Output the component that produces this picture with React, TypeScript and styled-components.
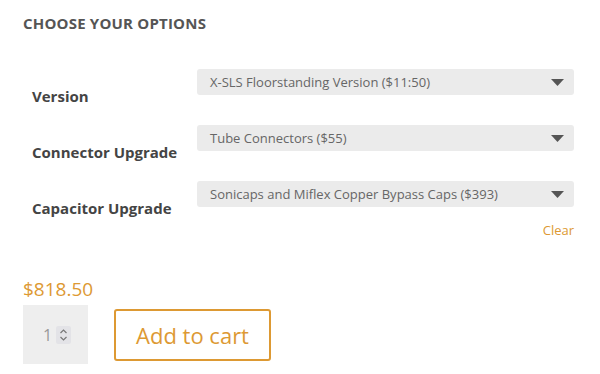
import styled, { createGlobalStyle } from 'styled-components';

const GlobalStyle = createGlobalStyle`
  html, body {
    margin: 0;
    padding: 0;
    background: #fff;
  }
  body {
    font-family: "Open Sans", "Liberation Sans", sans-serif;
  }
`;

const orange = '#dd9933';

const Wrapper = styled.div`
  width: 600px;
  padding: 13px 26px 0 23px;
  box-sizing: border-box;
`;

const Heading = styled.h3`
  margin: 0;
  font-size: 15px;
  line-height: 20px;
  font-weight: 700;
  color: #555;
  text-transform: uppercase;
  letter-spacing: 0.2px;
`;

const OptionsTable = styled.div`
  margin-top: 36px;
  display: grid;
  grid-template-columns: 174px 1fr;
  grid-auto-rows: minmax(56px, auto);
  align-items: start;
`;

const Label = styled.label`
  padding: 17px 0 0 9px;
  font-size: 15px;
  line-height: 20px;
  font-weight: 700;
  color: #444;
`;

const ValueCell = styled.div`
  display: flex;
  flex-direction: column;
  align-items: stretch;
`;

const SelectBox = styled.div`
  height: 26px;
  display: flex;
  align-items: center;
  justify-content: space-between;
  padding: 0 10px 0 13px;
  background: #ebebeb;
  border-radius: 3px;
  font-size: 13px;
  color: #666;
`;

const Caret = styled.svg`
  width: 13px;
  height: 7px;
  flex: none;
`;

const ClearLink = styled.a`
  align-self: flex-end;
  margin-top: 14px;
  font-size: 13px;
  line-height: 18px;
  color: ${orange};
  text-decoration: none;
`;

const Price = styled.div`
  margin-top: 37px;
  font-size: 19px;
  line-height: 26px;
  color: ${orange};
`;

const CartRow = styled.div`
  display: flex;
  align-items: flex-start;
  gap: 26px;
  margin-top: 3px;
`;

const Quantity = styled.div`
  width: 65px;
  height: 59px;
  background: #eeeeee;
  display: flex;
  align-items: center;
  justify-content: center;
  gap: 4px;
  box-sizing: border-box;
  padding-left: 3px;
`;

const QtyValue = styled.span`
  font-size: 16px;
  color: #999;
`;

const Spinner = styled.svg`
  width: 15px;
  height: 18px;
`;

const CartButton = styled.button`
  margin-top: 4px;
  width: 157px;
  height: 52px;
  border: 2px solid ${orange};
  border-radius: 3px;
  background: #fff;
  color: ${orange};
  font-family: "Open Sans", "Liberation Sans", sans-serif;
  font-size: 22px;
  padding: 0;
`;

const options = [
  { label: 'Version', value: 'X-SLS Floorstanding Version ($11:50)' },
  { label: 'Connector Upgrade', value: 'Tube Connectors ($55)' },
  { label: 'Capacitor Upgrade', value: 'Sonicaps and Miflex Copper Bypass Caps ($393)' },
];

export default function App() {
  return (
    <>
      <GlobalStyle />
      <Wrapper>
        <Heading>Choose your options</Heading>
        <OptionsTable>
          {options.map((o, i) => [
            <Label key={o.label + '-l'}>{o.label}</Label>,
            <ValueCell key={o.label + '-v'}>
              <SelectBox>
                <span>{o.value}</span>
                <Caret viewBox="0 0 13 7">
                  <path d="M0 0 H13 L6.5 7 Z" fill="#555" />
                </Caret>
              </SelectBox>
              {i === options.length - 1 && <ClearLink href="#">Clear</ClearLink>}
            </ValueCell>,
          ])}
        </OptionsTable>
        <Price>$818.50</Price>
        <CartRow>
          <Quantity>
            <QtyValue>1</QtyValue>
            <Spinner viewBox="0 0 15 18">
              <rect width="15" height="18" rx="2" fill="#e3e3e7" />
              <path d="M4.5 7 L7.5 4 L10.5 7" fill="none" stroke="#777" strokeWidth="1.2" />
              <path d="M4.5 11 L7.5 14 L10.5 11" fill="none" stroke="#777" strokeWidth="1.2" />
            </Spinner>
          </Quantity>
          <CartButton>Add to cart</CartButton>
        </CartRow>
      </Wrapper>
    </>
  );
}
